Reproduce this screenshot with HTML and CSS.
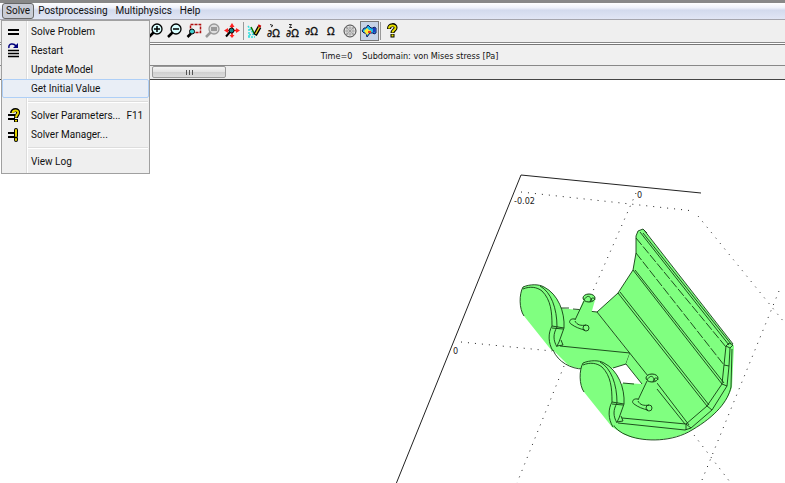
FILE: index.html
```html
<!DOCTYPE html>
<html lang="en">
<head>
    <meta charset="UTF-8">
    <meta name="viewport" content="width=device-width, initial-scale=1.0">
    <title>Solver</title>
    <link rel="stylesheet" href="styles.css">
</head>
<body>
    <nav class="menubar">
        <div class="menu">
            <button class="menu-title open">Solve</button>
            <div class="dropdown">
                <button class="item">
                    <svg class="icon" viewBox="0 0 16 16"><path d="M3 6h11M3 10h11" stroke="#000" stroke-width="2"/></svg>
                    <span>Solve Problem</span>
                </button>
                <button class="item">
                    <svg class="icon" viewBox="0 0 16 16"><path d="M3 7.500h11M3 10.500h11M3 13.500h11" stroke="#000" stroke-width="1.500"/><path d="M4 5C3 0 9 0 11 3" fill="none" stroke="#00007c" stroke-width="1.500"/><path d="M8 5h5V0z" fill="#00007c"/></svg>
                    <span>Restart</span>
                </button>
                <button class="item"><i class="icon"></i><span>Update Model</span></button>
                <button class="item hover"><i class="icon"></i><span>Get Initial Value</span></button>
                <hr>
                <button class="item">
                    <svg class="icon" viewBox="0 0 16 16"><path d="M3 7h7M3 11h7" stroke="#000" stroke-width="2"/><path d="M7 5C7 1 14 1 13 5C13 7 11 7 11 10M11 11v3" fill="none" stroke="#000" stroke-width="4"/><path d="M7.500 5C8 1.500 13.500 1.500 13 5C12.500 7 11 7 11 9.500M11 12v1.500" fill="none" stroke="#e8d800" stroke-width="2"/></svg>
                    <span>Solver Parameters...</span><kbd>F11</kbd>
                </button>
                <button class="item">
                    <svg class="icon" viewBox="0 0 16 16"><path d="M3 6h7M3 10h7" stroke="#000" stroke-width="2"/><path d="M11 3v6M11 11.500v1.500" stroke="#000" stroke-width="4" stroke-linecap="round"/><path d="M11 3v6M11 12v1" stroke="#e8d800" stroke-width="2" stroke-linecap="round"/></svg>
                    <span>Solver Manager...</span>
                </button>
                <hr>
                <button class="item"><i class="icon"></i><span>View Log</span></button>
            </div>
        </div>
        <button class="menu-title">Postprocessing</button>
        <button class="menu-title">Multiphysics</button>
        <button class="menu-title">Help</button>
    </nav>

    <div class="toolbar">
        <button class="tool" aria-label="Zoom in">
            <svg viewBox="0 0 16 16"><circle cx="9" cy="6" r="5" fill="#d8ffff" stroke="#000" stroke-width="1.300"/><path d="M6 6h6M9 3v6" stroke="#000" stroke-width="1.500"/><path d="M5.500 9.500L1 14" stroke="#000" stroke-width="2.500"/></svg>
        </button>
        <button class="tool" aria-label="Zoom out">
            <svg viewBox="0 0 16 16"><circle cx="9" cy="6" r="5" fill="#d8ffff" stroke="#000" stroke-width="1.300"/><path d="M6 6h6" stroke="#000" stroke-width="1.500"/><path d="M5.500 9.500L1 14" stroke="#000" stroke-width="2.500"/></svg>
        </button>
        <button class="tool" aria-label="Zoom window">
            <svg viewBox="0 0 16 16"><rect x="4.500" y="1.500" width="10" height="8" fill="none" stroke="#b01010" stroke-width="1.500" stroke-dasharray="3 1"/><circle cx="6" cy="8.500" r="2.500" fill="#40d0d0" stroke="#000"/><path d="M5 10.500l-3.500 3.500" stroke="#000" stroke-width="2.500"/></svg>
        </button>
        <button class="tool" aria-label="Zoom selection">
            <svg viewBox="0 0 16 16"><circle cx="9" cy="6" r="5" fill="#ddd" stroke="#999" stroke-width="1.300"/><path d="M6 4h6v4H6z" fill="#999"/><path d="M5.500 9.500L1 14" stroke="#999" stroke-width="2.500"/></svg>
        </button>
        <button class="tool" aria-label="Zoom extents">
            <svg viewBox="0 0 16 16"><path d="M8 2v12M2 7.500h12" stroke="#f00" stroke-width="1.500"/><path d="M5.500 4l2.500-4 2.500 4zM5.500 12l2.500 3 2.500-3zM12 5l4 2.500-4 2.500zM4 5l-4 2.500 4 2.500z" fill="#f22"/><circle cx="7.500" cy="7.500" r="2.500" fill="#188" stroke="#000"/><path d="M6 9l-4 4.500" stroke="#000" stroke-width="2"/></svg>
        </button>
        <span class="divider"></span>
        <button class="tool" aria-label="Draw mode">
            <svg viewBox="0 0 16 16"><path d="M1 3l7 10M2 12l5-1M2 6v8M1 14h7" stroke="#3dd" stroke-width="1.500" stroke-dasharray="2 1"/><path d="M4 4l3 6" stroke="#070" stroke-width="1.500"/><path d="M8 12l4.500-8" stroke="#000" stroke-width="4"/><path d="M8.500 11l4-7" stroke="#ec2" stroke-width="1.500"/><path d="M12 4l1-2" stroke="#c00" stroke-width="3"/></svg>
        </button>
        <button class="tool" aria-label="Point mode">
            <svg viewBox="0 0 16 16"><text x="1" y="14" class="symbol">∂Ω</text><path d="M4 1.500l3 1M5 4l2-1.500" stroke="#222"/></svg>
        </button>
        <button class="tool" aria-label="Edge mode">
            <svg viewBox="0 0 16 16"><text x="1" y="14" class="symbol">∂Ω</text><path d="M4 1.500h2.500L4.500 4.500H7" fill="none" stroke="#222"/></svg>
        </button>
        <button class="tool" aria-label="Boundary mode">
            <svg viewBox="0 0 16 16"><text x="1" y="12" class="symbol">∂Ω</text></svg>
        </button>
        <button class="tool" aria-label="Subdomain mode">
            <svg viewBox="0 0 16 16"><text x="4" y="12" class="symbol">Ω</text></svg>
        </button>
        <button class="tool" aria-label="Mesh mode">
            <svg viewBox="0 0 16 16"><circle cx="8" cy="8" r="6" fill="#e4e4e4" stroke="#444"/><path d="M3 5h10M2 8h12M3 11h10M5 3v10M8 2v12M11 3v10M4 4l8 8M12 4l-8 8" stroke="#888" stroke-width=".6"/></svg>
        </button>
        <button class="tool active" aria-label="Postprocessing mode">
            <svg viewBox="0 0 16 16"><path d="M1 8l2-3 2 0 2-3 3 3h2l1-1 2 1v5l-2 1-1-1H9l-3 4-1-4-2 0z" fill="#18b8e8" stroke="#10185c"/><path d="M3 8l3-3 2 2 3 1-3 2-2 2z" fill="#ffe838"/><path d="M7 8h3v2H7z" fill="#f03a20"/><path d="M12 5l2.500 0v4l-2.500 1z" fill="#2038c0"/></svg>
        </button>
        <span class="divider"></span>
        <button class="tool" aria-label="Help">
            <svg viewBox="0 0 16 16"><path d="M5 6C5 1 12 1 11.500 5C11.500 7 8.500 7 8.500 10M8.500 11v3.500" fill="none" stroke="#000" stroke-width="4"/><path d="M5 5.500C5 1.500 12 1.500 11.500 5C11.500 7 8.500 7 8.500 9.500M8.500 11.500v2" fill="none" stroke="#e8e000" stroke-width="2"/></svg>
        </button>
    </div>

    <div class="caption"><span>Time=0</span><span>Subdomain: von Mises stress [Pa]</span></div>

    <div class="scrollbar"><div class="thumb"><i></i><i></i><i></i></div></div>

    <main class="plot">
        <svg viewBox="0 80 785 403">
            <defs>
                <g id="fin">
                    <path class="fill" d="M583 363C590 360 599 360 604 363C618 370 625 388 624 404L618 422L612 427L584 392C579 385 579 370 583 363Z"/>
                    <path class="edge" d="M584 392C579 385 579 370 583 363C590 360 599 360 604 363C618 370 625 388 624 404L619 418L617 422L623 421L621 416"/>
                    <path class="edge" d="M583 365C590 362 597 363 602 367C611 376 612 388 612 402C608 409 608 419 613 427"/>
                    <path class="edge" d="M600 362C611 368 617 384 617 403C613 410 613 416 617 423M612 402L624 404M612 404L623 405"/>
                </g>
                <g id="peg">
                    <path class="fill" d="M584 299L575 320L588 325L595 300Z"/>
                    <path class="edge" d="M584 301L575 320"/>
                    <ellipse class="solid" cx="589" cy="298" rx="6" ry="4"/>
                    <path class="edge" d="M584 300C587 295 590 295 592 301M590 302C591 297 594 297 595 300"/>
                    <path class="edge" d="M575 319C570 318 568 322 571 324C575 327 580 329 585 330M575 321C577 325 581 326 586 325"/>
                    <circle class="edge" cx="586" cy="328" r="3"/>
                </g>
            </defs>

            <!-- axes and grid -->
            <path class="axis" d="M396 484L521 175L701 193"/>
            <path class="grid" d="M521 192L694 211M698 216L784 322M636 193L593 291M564 366L517 483M461 342L552 351M779 291L702 480M694 435L730 482"/>

            <!-- rear plate -->
            <path class="fill" d="M560 308L597 312L630 353L626 364L613 368C600 372 580 370 568 365L550 347Z"/>
            <path class="edge" d="M561 308L569 308M573 309L585 310M588 311L597 312M560 346L630 353L626 364L613 368M553 350C558 362 571 369 583 369"/>
            <use href="#fin" x="-60" y="-76"/>
            <use href="#peg"/>

            <!-- curved sheet and front plate -->
            <path class="fill" d="M597 312L618 293L633 270L636 253V236L638 231L643 229L731 342L734 346L732 387C728 401 716 416 692 430C673 441 645 443 625 435L612 427L605 400L623 383L642 384L626 364L630 353Z"/>
            <path class="edge" d="M597 312L618 293L633 270L636 253V236L638 231L643 229L647 233M597 312L648 376M626 364L642 384M623 383L634 384"/>
            <path class="edge" d="M618 293L707 406M620 292L709 405M633 270L722 384M635 270L724 383M640 232L729 345M644 230L733 344M643 233L731 344"/>
            <path class="edge dash" d="M636 253L724 365M636 238L726 347"/>
            <path class="edge" d="M657 383L689 425M657 389L685 424"/>
            <path class="edge" d="M726 346L724 365L722 384L707 406L686 424L622 418M730 348L729 366L727 386L712 410L691 428L685 430L618 423"/>
            <path class="edge" d="M724 365L729 366M722 384L727 386M707 406L712 410M686 424V430M686 424L691 428M726 346L730 348L733 345L729 343Z"/>
            <path class="edge" d="M732 349L731 387C728 401 716 416 692 430C673 442 645 442 629 436Q615 431 612 422"/>
            <use href="#fin"/>
            <use href="#peg" x="63" y="80"/>

            <text x="514" y="204" class="tick">-0.02</text>
            <text x="637" y="198" class="tick">0</text>
            <text x="453" y="354" class="tick">0</text>
        </svg>
    </main>
</body>
</html>
```
FILE: styles.css
```css
body {
    margin: 0;
    background: white;
    font-family: Roboto, sans-serif;
    font-size: 10px;
    color: #111;
    overflow: hidden;
}
button {
    font: inherit;
    color: inherit;
    border: 0;
    padding: 0;
    background: none;
}
.menubar {
    display: flex;
    height: 16px;
    padding-left: 2px;
    border-top: 3px solid #888;
    border-bottom: 1px solid #a5a5ad;
    background: linear-gradient(#fff, #eef1fa 30%, #d3daed 45%, #e1e6f5);
}
.menu {
    position: relative;
}
.menu-title {
    height: 16px;
    line-height: 16px;
    padding: 0 4px;
    white-space: nowrap;
}
.menu-title.open {
    line-height: 14px;
    padding: 0 3px;
    border: 1px solid #666;
    border-radius: 3px;
    background: #c9ccd6;
}
.dropdown {
    position: absolute;
    top: 17px;
    left: -1px;
    z-index: 1;
    width: 147px;
    padding: 1px 0 2px;
    border: 1px solid #a0a0a0;
    background: linear-gradient(90deg, #efefef 24px, #dcdcdc 24px, #dcdcdc 25px, #fff 25px, #fff 26px, #efefef 26px);
}
.item {
    display: flex;
    align-items: center;
    width: 100%;
    height: 19px;
    padding-left: 3px;
    white-space: nowrap;
}
.item.hover {
    border: 1px solid #aecff7;
    border-radius: 2px;
    padding-left: 2px;
    background: #e9eef6;
}
.icon {
    flex: none;
    width: 16px;
    height: 16px;
    margin-right: 10px;
}
.item kbd {
    font: inherit;
    margin-left: 6px;
}
hr {
    height: 1px;
    margin: 3px 1px 3px 26px;
    border: 0;
    border-top: 1px solid #ddd;
    background: #fff;
}
.toolbar {
    display: flex;
    align-items: center;
    height: 22px;
    padding-left: 147px;
    border-bottom: 1px solid #888;
    background: #efefef;
}
.tool {
    width: 19px;
    height: 20px;
    padding: 1px;
}
.tool svg {
    display: block;
    width: 16px;
    height: 16px;
}
.tool.active {
    border: 1px solid #777;
    padding: 0;
    background: #c6d3e6;
}
.divider {
    width: 1px;
    height: 18px;
    margin: 0 2px 0 1px;
    background: #999;
}
.symbol {
    font: 10px "DejaVu Sans", sans-serif;
    fill: #111;
    stroke: #111;
    stroke-width: 0.3;
}
.caption {
    display: flex;
    justify-content: center;
    align-items: center;
    gap: 10px;
    height: 19px;
    margin-top: 1px;
    padding: 1px 0 0 34px;
    border-top: 1px solid #777;
    border-bottom: 1px solid #888;
    background: #f0f0f0;
    font: 9px "DejaVu Sans Condensed", sans-serif;
}
.scrollbar {
    height: 13px;
    padding-left: 152px;
    border-bottom: 1px solid #444;
    background: #ececec;
}
.thumb {
    display: flex;
    justify-content: center;
    align-items: center;
    gap: 2px;
    width: 72px;
    height: 10px;
    border: 1px solid #999;
    border-radius: 2px;
    background: linear-gradient(#f4f4f4, #e2e2e2 50%, #cfcfcf 50%, #dcdcdc);
}
.thumb i {
    width: 1px;
    height: 5px;
    background: #555;
}
.plot svg {
    display: block;
    width: 100%;
}
.axis {
    fill: none;
    stroke: #222;
}
.grid {
    fill: none;
    stroke: #222;
    stroke-dasharray: 1 6;
}
.fill {
    fill: #80ff80;
}
.edge {
    fill: none;
    stroke: #123c12;
    stroke-width: 0.9;
}
.dash {
    stroke-dasharray: 9 2;
}
.solid {
    fill: #80ff80;
    stroke: #123c12;
}
.tick {
    font: 9px "DejaVu Sans Condensed", sans-serif;
    fill: #222;
}
```
